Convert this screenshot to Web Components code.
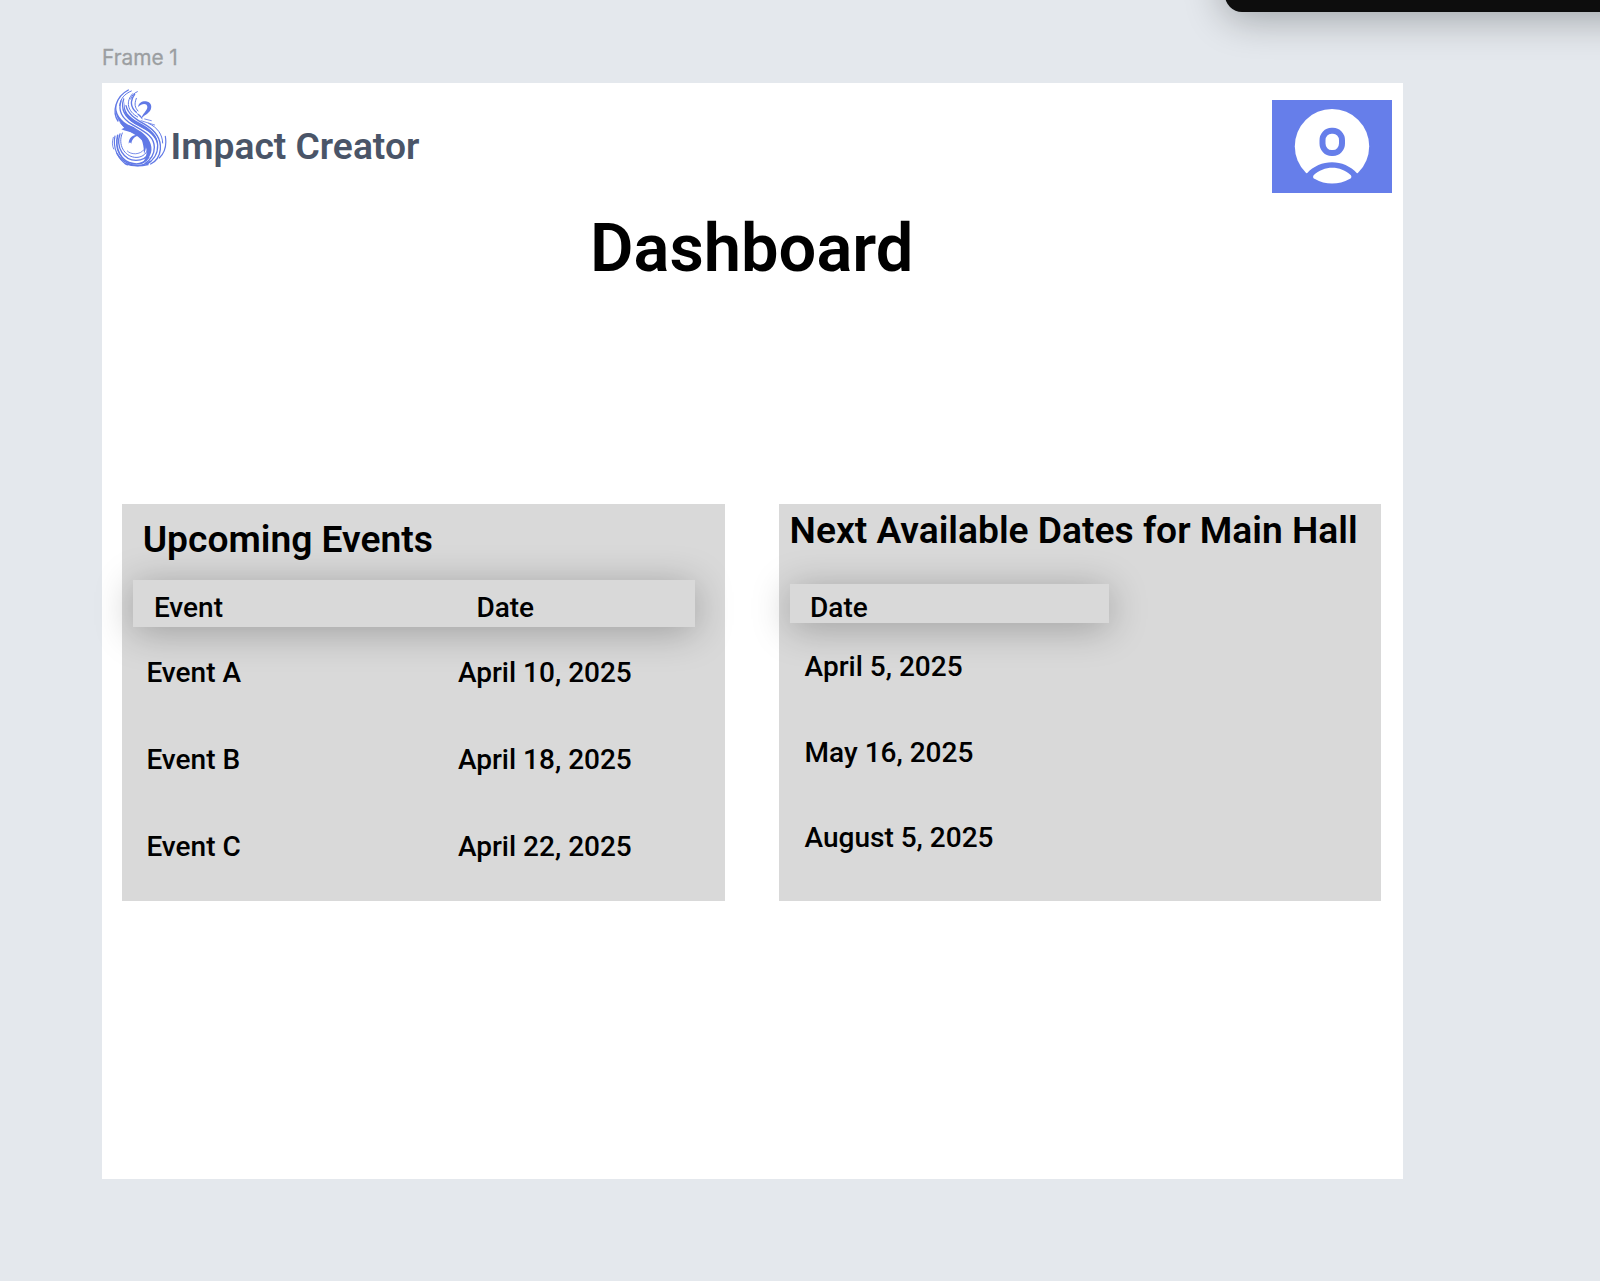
<!DOCTYPE html>
<html lang="en">
<head>
<meta charset="utf-8">
<title>Frame 1</title>
<style>
  html, body { margin: 0; padding: 0; }
  body { width: 1600px; height: 1281px; overflow: hidden; background: #e4e8ed; }
</style>
</head>
<body>
<design-canvas>
  <design-frame label="Frame 1">
    <app-header slot="header" name="Impact Creator"></app-header>
    <page-title slot="title">Dashboard</page-title>
    <data-panel class="events" heading="Upcoming Events">
      <band-row slot="band"><span>Event</span><span>Date</span></band-row>
      <data-row><span>Event A</span><span>April 10, 2025</span></data-row>
      <data-row><span>Event B</span><span>April 18, 2025</span></data-row>
      <data-row><span>Event C</span><span>April 22, 2025</span></data-row>
    </data-panel>
    <data-panel class="dates" heading="Next Available Dates for Main Hall">
      <band-row slot="band"><span>Date</span></band-row>
      <data-row><span>April 5, 2025</span></data-row>
      <data-row><span>May 16, 2025</span></data-row>
      <data-row><span>August 5, 2025</span></data-row>
    </data-panel>
  </design-frame>
</design-canvas>
<script>
const define = (name, html, setup) => customElements.define(name, class extends HTMLElement {
  constructor() {
    super();
    this.attachShadow({ mode: 'open' }).innerHTML = html;
  }
  connectedCallback() { if (setup) setup(this, this.shadowRoot); }
});

define('design-canvas', `
  <style>
    :host { display: block; position: relative; box-sizing: border-box; width: 1600px; height: 1281px;
      padding: 43px 0 0 102px; overflow: hidden; background: #e4e8ed; font-family: Roboto, "Liberation Sans", sans-serif; }
    .toolbar { position: absolute; left: 1225px; top: -60px; width: 500px; height: 72px; border-radius: 17px;
      background: #0d0d0d; box-shadow: 0 5px 40px rgba(0,8,8,.33); }
  </style>
  <slot></slot><div class="toolbar"></div>`);

define('design-frame', `
  <style>
    :host { display: block; width: 1301.3px; }
    .label { height: 40px; font: 400 20.8px/29px Inter, sans-serif; color: #9b9ea1; -webkit-text-stroke: .3px #9b9ea1; }
    .page { height: 1096px; background: #fff; display: flex; flex-direction: column; }
    .panels { display: flex; gap: 54.4px; padding-left: 20.4px; margin-top: 206px; }
  </style>
  <div class="label"></div>
  <div class="page">
    <slot name="header"></slot><slot name="title"></slot>
    <div class="panels"><slot></slot></div>
  </div>`, (el, root) => { root.querySelector('.label').textContent = el.getAttribute('label'); });

define('brand-mark', `
  <style>:host { display: block; width: 60px; height: 80px; } svg { display: block; }</style>
  <svg width="60" height="80" viewBox="54 36 180 240" fill="none" stroke="#6179e6" stroke-linecap="round">
    <g stroke-width="4">
      <path d="M115 45C76 65 66 112 84 138"/>
      <path d="M124 48C103 57 91 71 89 92" stroke-width="3"/>
      <path d="M142 50C132 54 125 62 122 72" stroke-width="3"/>
      <path d="M134 58C119 79 121 96 139 112"/>
      <path d="M128 56C106 79 112 109 143 126" stroke-width="3"/>
      <path d="M139 70C132 88 135 98 144 108" stroke-width="3"/>
      <path d="M101 72C91 104 106 128 136 145C175 166 202 178 203 211C204 238 188 258 170 268"/>
      <path d="M93 78C83 109 98 132 127 149C165 171 193 184 193 217C193 239 180 256 165 266"/>
      <path d="M108 92C114 118 137 132 161 146C196 166 214 190 211 223C209 244 196 260 182 267"/>
      <path d="M176 145C203 158 217 178 218 204" stroke-width="3"/>
      <path d="M226 184C231 213 223 234 208 249" stroke-width="3.5"/>
      <path d="M153 137L194 150M164 132L184 137" stroke-width="2.5"/>
      <path d="M75 183C67 217 84 254 112 270" stroke-width="3.5"/>
      <path d="M70 187C65 202 67 213 71 222" stroke-width="2.5"/>
      <path d="M83 181C73 222 93 260 130 266C151 270 168 260 176 247" stroke-width="5"/>
      <path d="M90 177C76 216 102 256 138 256C158 256 171 246 176 233" stroke-width="4"/>
      <path d="M97 174C82 209 103 243 134 247C153 249 168 239 173 224" stroke-width="3"/>
      <path d="M112 228C123 240 150 240 162 224" stroke-width="2.5"/>
      <path d="M81 236C100 267 145 285 181 259"/>
      <path d="M105 266C127 274 151 274 174 269"/>
    </g>
    <g fill="#6179e6" stroke="none">
      <path d="M80 83C74 116 91 137 124 154C154 168 175 184 182 207C190 232 178 252 158 264C173 243 174 220 160 201C151 188 139 181 125 173C113 166 99 158 91 143C78 126 73 105 80 83Z"/>
      <path d="M105 78C99 109 117 125 146 142C184 162 205 182 203 211C196 183 176 168 145 153C112 137 94 111 105 78Z"/>
      <path d="M88 142C102 148 118 150 132 157L156 184C138 172 114 172 94 163L103 158Z"/>
      <path d="M116 206C116 187 130 176 150 180C134 184 126 192 124 206C121 201 118 202 116 206Z"/>
      <path d="M149 174C166 191 175 213 162 236C162 212 157 199 149 174Z"/>
      <path d="M144 96C146 84 156 78 168 79C182 81 187 93 182 104C176 116 162 120 154 131C156 117 171 109 172 97C173 85 157 83 144 96Z"/>
      <path d="M139 114C150 117 156 124 158 134C150 126 145 122 139 114Z"/>
    </g>
  </svg>`);

define('user-avatar', `
  <style>:host { display: block; width: 120.3px; height: 92.5px; background: #667eea; } svg { display: block; }</style>
  <svg width="120" height="92.5" viewBox="0 0 120 92.5">
    <circle cx="60" cy="46.2" r="37.2" fill="#fff"/>
    <path d="M28 81L34.8 73.5C48 58.5 72 58.5 85.2 73.5L92 81V92H28Z" fill="#667eea"/>
    <path d="M41.600 75.200C52 65.200 68.500 65.200 78.900 75.200C80 77 79.300 78.300 77.500 79C67 85 53 85 43 79C41 78.300 40.600 77 41.600 75.200Z" fill="#fff"/>
    <rect x="50.500" y="30.700" width="19.500" height="22.300" rx="9" ry="9.500" fill="#fff" stroke="#667eea" stroke-width="6"/>
  </svg>`);

define('app-header', `
  <style>
    :host { display: flex; justify-content: space-between; height: 110px; padding: 4px 11px 0 6px; box-sizing: border-box; }
    .brand { display: flex; gap: 2.5px; }
    .name { padding-top: 37.3px; font-size: 37.2px; line-height: 44px; font-weight: 600; color: #4a5568; white-space: nowrap; }
    user-avatar { margin-top: 13px; }
  </style>
  <div class="brand"><brand-mark></brand-mark><div class="name"></div></div>
  <user-avatar></user-avatar>`, (el, root) => { root.querySelector('.name').textContent = el.getAttribute('name'); });

define('page-title', `
  <style>:host { display: block; height: 105px; padding-left: 488px; box-sizing: border-box; font-weight: 600; font-size: 66.8px; line-height: 110px; color: #000; white-space: nowrap; }</style>
  <slot></slot>`);

define('data-panel', `
  <style>
    :host { display: flex; flex-direction: column; box-sizing: border-box; width: 602.3px; height: 396.7px; background: #d9d9d9; color: #000; }
    h2 { flex: none; box-sizing: border-box; margin: 0; font-size: 37.2px; line-height: 44px; font-weight: 600; white-space: nowrap; }
    :host(.events) h2 { padding: 13px 0 0 20.300px; height: 76px; }
    :host(.dates) h2 { padding: 4.200px 0 0 10.500px; height: 80px; }
    .rows { display: flex; flex-direction: column; height: 0; }
    :host(.events) .rows { --pitch: 87px; padding: 26px 0 0 24px; }
    :host(.dates) .rows { --pitch: 85.300px; padding: 24.300px 0 0 25.500px; }
  </style>
  <h2></h2><slot name="band"></slot><div class="rows"><slot></slot></div>`,
  (el, root) => { root.querySelector('h2').textContent = el.getAttribute('heading'); });

const rowCss = `font-size: 28px; line-height: 40px; font-weight: 500; white-space: nowrap;`;
define('band-row', `
  <style>
    :host { display: flex; flex: none; box-sizing: border-box; background: #d9d9d9; box-shadow: 0 5px 38px rgba(0,0,0,.28); ${rowCss} }
    ::slotted(span) { flex: none; width: 322.500px; }
  </style>
  <slot></slot>`, el => {
    const two = el.children.length > 1;
    el.style.cssText = two
      ? 'width:561.500px;height:46.500px;margin-left:11px;padding:7.500px 0 0 20.500px'
      : 'width:319px;height:39px;margin-left:11px;padding:4px 0 0 20px';
  });

define('data-row', `
  <style>
    :host { display: flex; flex: none; height: var(--pitch); ${rowCss} }
    ::slotted(span) { flex: none; width: 311.500px; }
  </style>
  <slot></slot>`);
</script>
</body>
</html>
